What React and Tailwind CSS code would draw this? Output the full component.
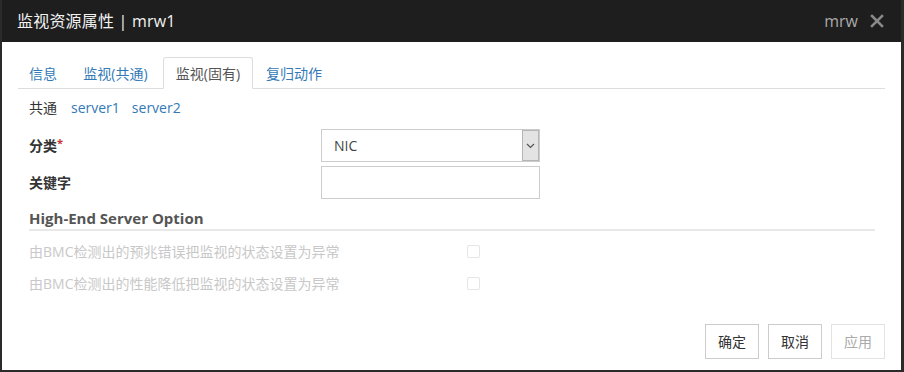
const font = { fontFamily: '"Open Sans", "Noto Sans CJK SC", sans-serif' };

function Tab({ label, active, w }) {
  if (active) {
    return (
      <div className={`${w} mr-[2px] -mb-px h-[32px] flex items-center justify-center border border-[#ddd] border-b-white bg-white text-[#555] rounded-t-[3px]`}>
        {label}
      </div>
    );
  }
  return (
    <div className={`${w} mr-[2px] -mb-px h-[32px] flex items-center justify-center border border-transparent text-[#337ab7]`}>
      {label}
    </div>
  );
}

function Chevron() {
  return (
    <svg width="9" height="6" viewBox="0 0 9 6" fill="none" stroke="#555" strokeWidth="1.2">
      <polyline points="1 1 4.5 4.5 8 1" />
    </svg>
  );
}

export default function App() {
  return (
    <div style={font} className="w-[904px] h-[372px] bg-white border-l-2 border-r-[3px] border-b-2 border-[#2b2b2b] flex flex-col text-[14px] text-[#333]">
      {/* header */}
      <div className="h-[42px] shrink-0 bg-[#1e1e1e] pl-[15px] pr-[17px] flex items-center justify-between">
        <div className="text-[16px] tracking-[0.2px] text-[#f2f2f2]">监视资源属性 | mrw1</div>
        <div className="flex items-center gap-[12px]">
          <span className="text-[16px] text-[#aaa]">mrw</span>
          <svg width="14" height="14" viewBox="0 0 14 14" stroke="#8a8a8a" strokeWidth="2.6" strokeLinecap="square">
            <line x1="2" y1="2" x2="12" y2="12" />
            <line x1="12" y1="2" x2="2" y2="12" />
          </svg>
        </div>
      </div>

      {/* body */}
      <div className="pt-[15px] px-[16px]">
        <div className="flex border-b border-[#ddd]">
          <Tab label="信息" w="w-[50px]" />
          <Tab label="监视(共通)" w="w-[91px]" />
          <Tab label="监视(固有)" w="w-[90px]" active />
          <Tab label="复归动作" w="w-[78px]" />
        </div>

        <div className="pl-[11px] pr-[10px]">
          <div className="mt-[10px] leading-[18px] flex gap-[14px]">
            <span className="text-[#333]">共通</span>
            <div className="flex gap-[12px] text-[#337ab7]">
              <span>server1</span>
              <span>server2</span>
            </div>
          </div>

          <div className="mt-[12px] flex items-center">
            <div className="w-[292px] font-bold">
              分类<span className="text-[#c9302c] text-[11px] align-top">*</span>
            </div>
            <div className="w-[219px] h-[33px] border border-[#ccc] flex items-stretch">
              <div className="flex-1 flex items-center pl-[12px] text-[#444]">NIC</div>
              <div className="w-[17px] bg-[#e3e3e3] border border-[#b5b5b5] flex items-center justify-center">
                <Chevron />
              </div>
            </div>
          </div>

          <div className="mt-[4px] flex items-center">
            <div className="w-[292px] font-bold">关键字</div>
            <div className="w-[219px] h-[33px] border border-[#ccc]" />
          </div>

          <div className="mt-[9px] leading-[20px] pb-[1px] font-bold text-[15px] text-[#555] border-b-2 border-[#e8e8e8]">
            High-End Server Option
          </div>

          <div className="mt-[4px] h-[32px] flex items-center text-[#c8c8c8]">
            <div className="w-[438px]">由BMC检测出的预兆错误把监视的状态设置为异常</div>
            <div className="w-[13px] h-[13px] border border-[#e6e6e6] rounded-[2px]" />
          </div>
          <div className="h-[32px] flex items-center text-[#c8c8c8]">
            <div className="w-[438px]">由BMC检测出的性能降低把监视的状态设置为异常</div>
            <div className="w-[13px] h-[13px] border border-[#e6e6e6] rounded-[2px]" />
          </div>
        </div>
      </div>

      {/* footer */}
      <div className="mt-auto flex justify-end gap-[9px] pr-[16px] pb-[11px]">
        <button className="w-[54px] h-[35px] border border-[#ccc] bg-white text-[#333]">确定</button>
        <button className="w-[54px] h-[35px] border border-[#ccc] bg-white text-[#333]">取消</button>
        <button className="w-[54px] h-[35px] border border-[#e3e3e3] bg-white text-[#aaa]">应用</button>
      </div>
    </div>
  );
}
